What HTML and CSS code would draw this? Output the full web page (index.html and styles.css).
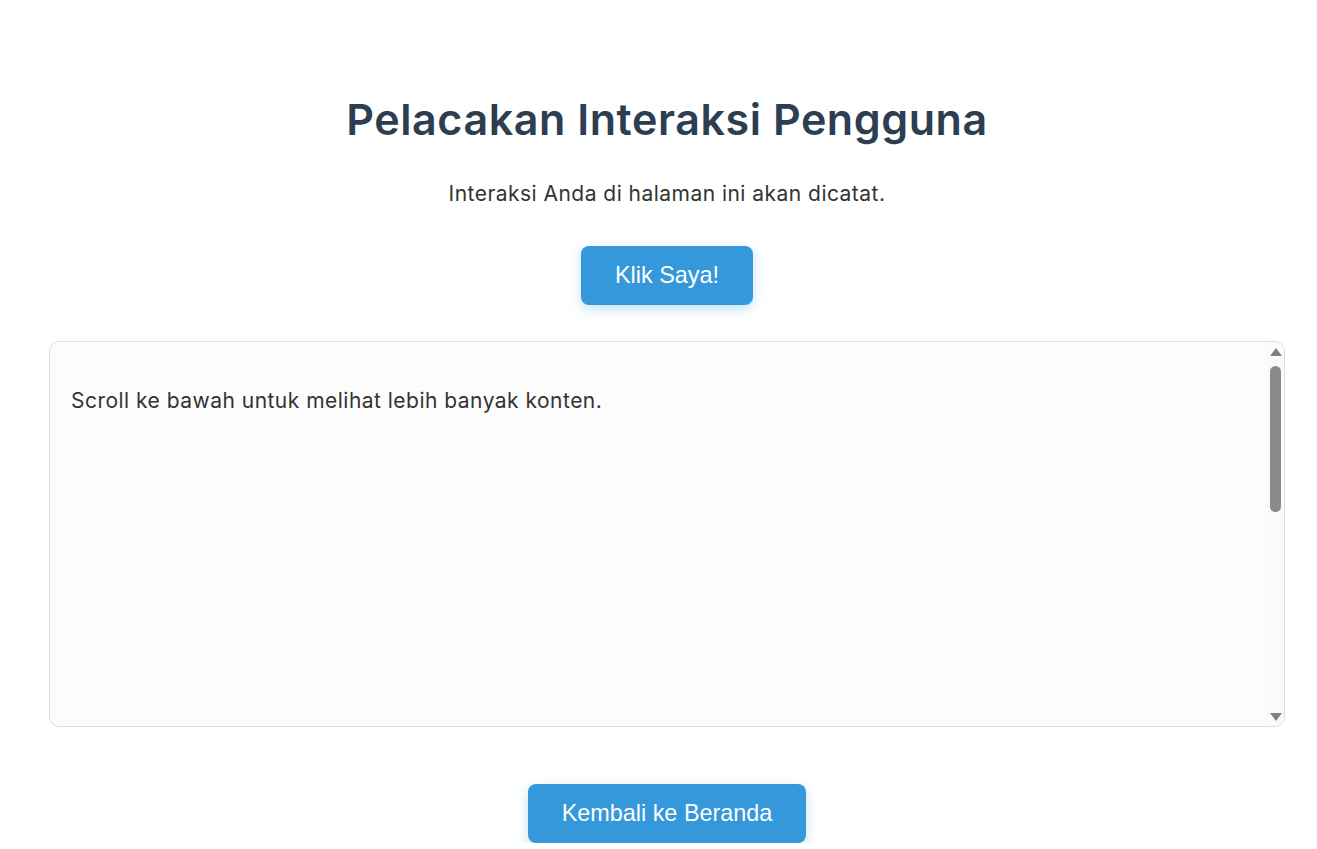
FILE: index.html
```html
<!DOCTYPE html>
<html lang="id">
<head>
<meta charset="utf-8">
<title>Pelacakan Interaksi Pengguna</title>
<link rel="stylesheet" href="styles.css">
</head>
<body>
<main class="page">
  <h1 class="title">Pelacakan Interaksi Pengguna</h1>
  <p class="subtitle">Interaksi Anda di halaman ini akan dicatat.</p>
  <button class="btn btn-click" type="button">Klik Saya!</button>
  <section class="scroll-box">
    <div class="scroll-content">
      <p class="scroll-text">Scroll ke bawah untuk melihat lebih banyak konten.</p>
    </div>
    <div class="scrollbar" aria-hidden="true">
      <span class="sb-arrow sb-up"></span>
      <span class="sb-thumb"></span>
      <span class="sb-fill"></span>
      <span class="sb-arrow sb-down"></span>
    </div>
  </section>
  <button class="btn btn-home" type="button">Kembali ke Beranda</button>
</main>
</body>
</html>
```
FILE: styles.css
```css
html, body {
  margin: 0;
  padding: 0;
  background: #ffffff;
  overflow: hidden;
}
body {
  font-family: Inter, "Noto Sans", sans-serif;
  color: #333333;
}
.page {
  display: flex;
  flex-direction: column;
  align-items: center;
  padding: 93px 32px 0 49px;
  text-align: center;
}
.title {
  margin: 0;
  font-size: 43px;
  line-height: 52px;
  font-weight: 600;
  letter-spacing: 0.57px;
  color: #2c3e50;
}
.subtitle {
  margin: 32px 0 0;
  font-size: 21px;
  line-height: 1.6;
  letter-spacing: 0.47px;
  color: #333333;
}
.btn {
  border: none;
  border-radius: 8px;
  background: #3498db;
  color: #ffffff;
  font-family: "Liberation Sans", Arial, sans-serif;
  font-size: 23.4px;
  line-height: 27px;
  padding: 16px 34px;
  box-shadow: 0 4px 12px rgba(52, 152, 219, 0.3);
  cursor: pointer;
}
.btn-click {
  margin-top: 35px;
}
.scroll-box {
  position: relative;
  box-sizing: border-box;
  align-self: stretch;
  margin-top: 36px;
  height: 386px;
  border: 1px solid #dddddd;
  border-radius: 10px;
  background: #fcfcfc;
  overflow: hidden;
  text-align: left;
}
.scroll-content {
  padding: 42px 40px 20px 21px;
}
.scroll-text {
  margin: 0;
  font-size: 21px;
  line-height: 1.6;
  letter-spacing: 0.48px;
  color: #333333;
}
.scrollbar {
  position: absolute;
  top: 0;
  right: 0;
  bottom: 0;
  width: 17px;
  box-sizing: border-box;
  padding: 6px 0 5px;
  background: #fafafa;
  display: flex;
  flex-direction: column;
  align-items: center;
}
.sb-arrow {
  width: 0;
  height: 0;
  border-left: 6px solid transparent;
  border-right: 6px solid transparent;
}
.sb-up {
  border-bottom: 8px solid #808080;
}
.sb-down {
  border-top: 8px solid #808080;
}
.sb-thumb {
  margin-top: 10px;
  width: 11px;
  height: 146px;
  border-radius: 6px;
  background: #8b8b8b;
}
.sb-fill {
  flex: 1;
}
.btn-home {
  margin-top: 57px;
}
```
